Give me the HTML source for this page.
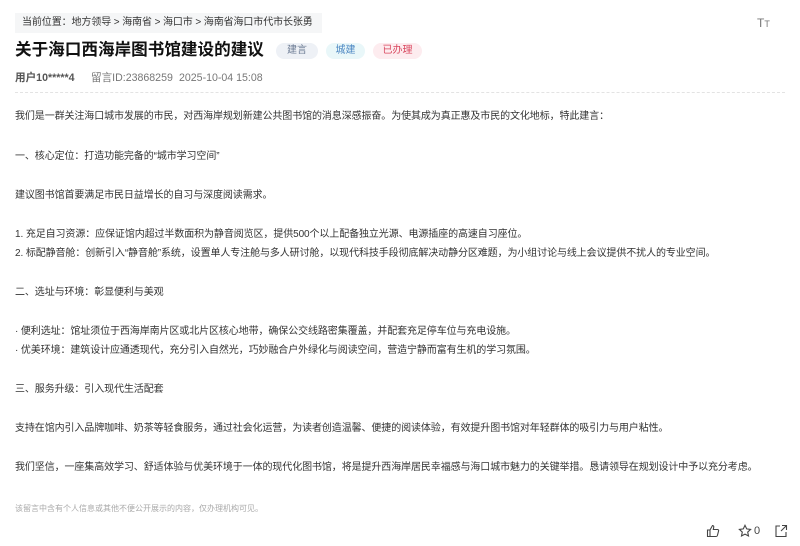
<!DOCTYPE html>
<html><head><meta charset="utf-8"><style>
*{margin:0;padding:0;box-sizing:border-box}
body{width:800px;height:546px;background:#fff;position:relative;overflow:hidden;font-family:"Liberation Sans","Noto Sans CJK SC",sans-serif;color:#333}
.a{position:absolute;white-space:nowrap}
.bc{left:15px;top:13px;width:307px;height:20px;background:#f5f6f7;font-size:10px;line-height:20px;padding-left:7px;color:#333;letter-spacing:-0.1px}
.t{left:15px;top:39px;font-size:16.6px;font-weight:bold;color:#111;line-height:22px}
.tag{top:43px;height:16px;border-radius:8px;font-size:10px;line-height:16px;text-align:center}
.m{top:71px;font-size:10.6px;color:#777;line-height:14px}
.hr{left:15px;top:92px;width:770px;border-top:1px dashed #e3e3e3}
.p{left:15px;font-size:10px;line-height:13px;color:#333;letter-spacing:-0.1px}
</style></head><body>
<div class="a bc">当前位置：地方领导 &gt; 海南省 &gt; 海口市 &gt; 海南省海口市代市长张勇</div>
<div class="a" style="left:757px;top:16px;font-size:12px;color:#777">T<span style="font-size:9px">T</span></div>
<div class="a t">关于海口西海岸图书馆建设的建议</div>
<div class="a tag" style="left:276px;width:42px;background:#eef1f6;color:#6b7a93">建言</div>
<div class="a tag" style="left:326px;width:39px;background:#e9f7f9;color:#4b86c2">城建</div>
<div class="a tag" style="left:373px;width:49px;background:#fdecef;color:#d9485f">已办理</div>
<div class="a m" style="left:15px;color:#555;font-weight:bold">用户10*****4</div>
<div class="a m" style="left:91px">留言ID:23868259</div>
<div class="a m" style="left:179px">2025-10-04 15:08</div>
<div class="a hr"></div>
<div class="a p" style="top:110px">我们是一群关注海口城市发展的市民，对西海岸规划新建公共图书馆的消息深感振奋。为使其成为真正惠及市民的文化地标，特此建言：</div>
<div class="a p" style="top:150px">一、核心定位：打造功能完备的“城市学习空间”</div>
<div class="a p" style="top:189px">建议图书馆首要满足市民日益增长的自习与深度阅读需求。</div>
<div class="a p" style="top:228px">1. 充足自习资源：应保证馆内超过半数面积为静音阅览区，提供500个以上配备独立光源、电源插座的高速自习座位。</div>
<div class="a p" style="top:247px">2. 标配静音舱：创新引入“静音舱”系统，设置单人专注舱与多人研讨舱，以现代科技手段彻底解决动静分区难题，为小组讨论与线上会议提供不扰人的专业空间。</div>
<div class="a p" style="top:286px">二、选址与环境：彰显便利与美观</div>
<div class="a p" style="top:325px">· 便利选址：馆址须位于西海岸南片区或北片区核心地带，确保公交线路密集覆盖，并配套充足停车位与充电设施。</div>
<div class="a p" style="top:344px">· 优美环境：建筑设计应通透现代，充分引入自然光，巧妙融合户外绿化与阅读空间，营造宁静而富有生机的学习氛围。</div>
<div class="a p" style="top:383px">三、服务升级：引入现代生活配套</div>
<div class="a p" style="top:422px">支持在馆内引入品牌咖啡、奶茶等轻食服务，通过社会化运营，为读者创造温馨、便捷的阅读体验，有效提升图书馆对年轻群体的吸引力与用户粘性。</div>
<div class="a p" style="top:461px">我们坚信，一座集高效学习、舒适体验与优美环境于一体的现代化图书馆，将是提升西海岸居民幸福感与海口城市魅力的关键举措。恳请领导在规划设计中予以充分考虑。</div>
<div class="a" style="left:15px;top:503px;font-size:8px;color:#aaa">该留言中含有个人信息或其他不便公开展示的内容，仅办理机构可见。</div>
<svg class="a" style="left:706px;top:524px" width="14" height="14" viewBox="0 0 14 14" fill="none" stroke="#444" stroke-width="1.1"><path d="M1.5 6h2.5v6.5H1.5zM4 6l2.5-4.5c1 0 1.5.8 1.2 2L7.3 5.5h4.2c.8 0 1.3.7 1.1 1.4l-1.2 4.6c-.2.6-.6 1-1.2 1H4"/></svg>
<svg class="a" style="left:738px;top:524px" width="14" height="14" viewBox="0 0 14 14" fill="none" stroke="#444" stroke-width="1.1"><path d="M7 1.3l1.7 3.6 3.9.5-2.9 2.7.8 3.9L7 10.1 3.5 12l.8-3.9L1.4 5.4l3.9-.5z"/></svg>
<div class="a" style="left:754px;top:525px;font-size:11px;color:#444">0</div>
<svg class="a" style="left:774px;top:524px" width="14" height="14" viewBox="0 0 14 14" fill="none" stroke="#444" stroke-width="1.1"><path d="M6 2H2v10.5h10V8M8 1.5h4.5V6M12.5 1.5L7 7"/></svg>
</body></html>
